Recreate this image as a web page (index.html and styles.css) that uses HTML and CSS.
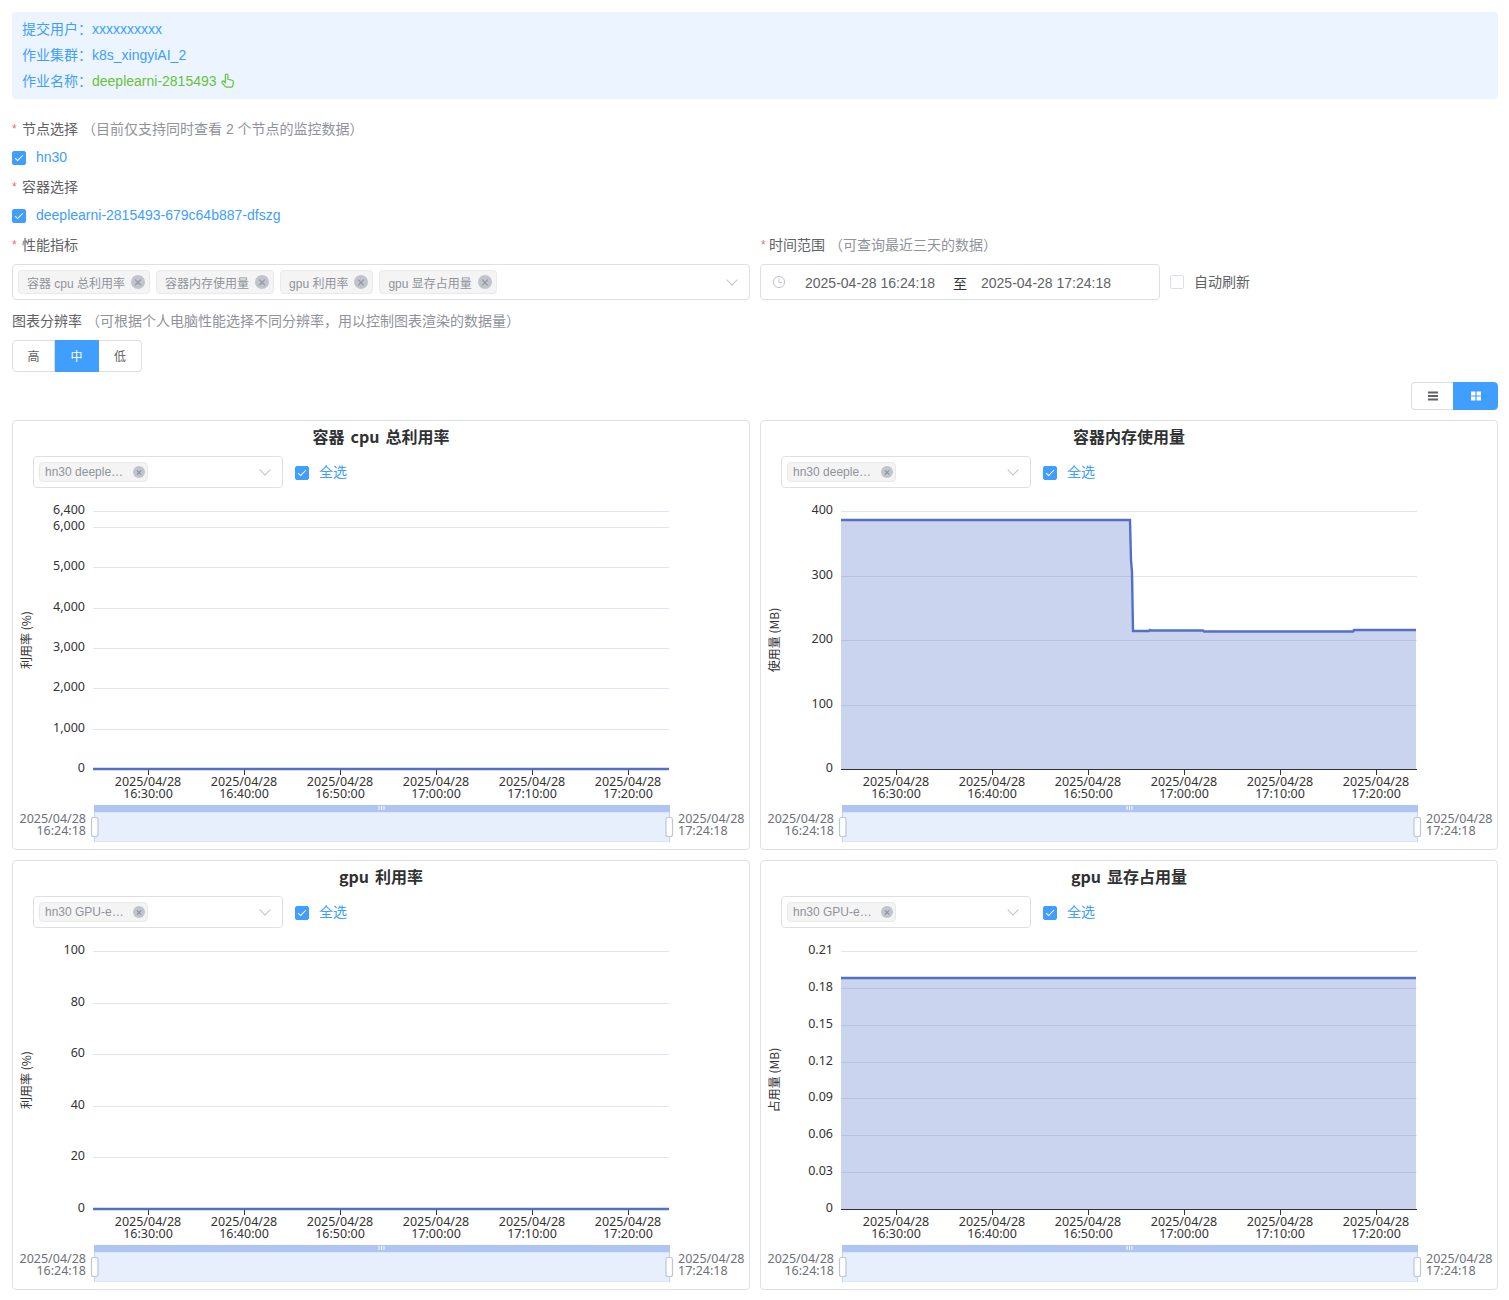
FILE: index.html
```html
<!DOCTYPE html>
<html lang="zh-CN">
<head>
    <meta charset="UTF-8">
    <meta name="viewport" content="width=device-width, initial-scale=1.0">
    <title>作业监控</title>
    <link rel="stylesheet" href="styles.css">
</head>
<body>
    <div class="job-info">
        <div class="job-row"><span>提交用户：</span>xxxxxxxxxx</div>
        <div class="job-row"><span>作业集群：</span>k8s_xingyiAI_2</div>
        <div class="job-row"><span>作业名称：</span><span class="job-link">deeplearni-2815493
            <svg class="hand-icon" viewBox="0 0 14 14"><path d="M5 7.2V2.1a1.2 1.2 0 0 1 2.4 0V5.9l3.9.9c.8.2 1.3.9 1.2 1.7l-.5 3.6c-.1.6-.6 1-1.2 1H5.9c-.4 0-.8-.2-1-.5L2 9.3c-.4-.5-.3-1.2.2-1.6.5-.4 1.2-.3 1.6.1L5 9z"/></svg></span></div>
    </div>

    <div class="field">
        <div class="field-label"><span class="req">*</span>节点选择<span class="hint">（目前仅支持同时查看 2 个节点的监控数据）</span></div>
        <label class="check-row"><span class="check checked"></span>hn30</label>
    </div>

    <div class="field">
        <div class="field-label"><span class="req">*</span>容器选择</div>
        <label class="check-row"><span class="check checked"></span>deeplearni-2815493-679c64b887-dfszg</label>
    </div>

    <div class="field-columns">
        <div>
            <div class="field-label wide"><span class="req">*</span>性能指标</div>
            <div class="select large">
                <span class="tag">容器 cpu 总利用率<i class="tag-close"></i></span>
                <span class="tag">容器内存使用量<i class="tag-close"></i></span>
                <span class="tag">gpu 利用率<i class="tag-close"></i></span>
                <span class="tag">gpu 显存占用量<i class="tag-close"></i></span>
                <i class="arrow"></i>
            </div>
        </div>
        <div>
            <div class="field-label wide"><span class="req narrow">*</span>时间范围<span class="hint">（可查询最近三天的数据）</span></div>
            <div class="time-row">
                <div class="date-range">
                    <svg class="clock-icon" viewBox="0 0 14 14"><circle cx="7" cy="7" r="5.6"/><path d="M7 3.6V7.4H10"/></svg>
                    <span class="date-value">2025-04-28 16:24:18</span>
                    <span class="date-sep">至</span>
                    <span class="date-value">2025-04-28 17:24:18</span>
                </div>
                <label class="auto-refresh"><span class="check"></span>自动刷新</label>
            </div>
        </div>
    </div>

    <div class="field resolution">
        <div class="field-label wide"><span>图表分辨率</span><span class="hint">（可根据个人电脑性能选择不同分辨率，用以控制图表渲染的数据量）</span></div>
        <div class="radio-group">
            <span class="radio">高</span>
            <span class="radio active">中</span>
            <span class="radio">低</span>
        </div>
    </div>

    <div class="view-bar">
        <div class="view-toggle">
            <span class="view-btn">
                <svg viewBox="0 0 10 10"><path d="M0 .5h10v2H0zM0 4h10v2H0zM0 7.5h10v2H0z"/></svg>
            </span>
            <span class="view-btn active">
                <svg viewBox="0 0 10 10"><path d="M0 .5h4.4v4H0zM5.6 .5H10v4H5.6zM0 5.6h4.4v4H0zM5.6 5.6H10v4H5.6z"/></svg>
            </span>
        </div>
    </div>

    <div class="chart-grid">
        <div class="card">
            <div class="card-title">容器 cpu 总利用率</div>
            <div class="card-tools">
                <div class="select small"><span class="tag"><span class="tag-text">hn30 deeple…</span><i class="tag-close"></i></span><i class="arrow"></i></div>
                <label class="check-row"><span class="check checked"></span>全选</label>
            </div>
            <svg class="chart" id="chartCpu" viewBox="0 0 736 348"></svg>
        </div>
        <div class="card">
            <div class="card-title">容器内存使用量</div>
            <div class="card-tools">
                <div class="select small"><span class="tag"><span class="tag-text">hn30 deeple…</span><i class="tag-close"></i></span><i class="arrow"></i></div>
                <label class="check-row"><span class="check checked"></span>全选</label>
            </div>
            <svg class="chart" id="chartMem" viewBox="0 0 736 348"></svg>
        </div>
        <div class="card">
            <div class="card-title">gpu 利用率</div>
            <div class="card-tools">
                <div class="select small"><span class="tag"><span class="tag-text">hn30 GPU-e…</span><i class="tag-close"></i></span><i class="arrow"></i></div>
                <label class="check-row"><span class="check checked"></span>全选</label>
            </div>
            <svg class="chart" id="chartGpu" viewBox="0 0 736 348"></svg>
        </div>
        <div class="card">
            <div class="card-title">gpu 显存占用量</div>
            <div class="card-tools">
                <div class="select small"><span class="tag"><span class="tag-text">hn30 GPU-e…</span><i class="tag-close"></i></span><i class="arrow"></i></div>
                <label class="check-row"><span class="check checked"></span>全选</label>
            </div>
            <svg class="chart" id="chartVram" viewBox="0 0 736 348"></svg>
        </div>
    </div>

    <script src="charts.js"></script>
</body>
</html>
```

FILE: styles.css
```css
* {
    box-sizing: border-box;
}

body {
    margin: 0;
    padding: 12px 11px 12px 12px;
    font-family: "Liberation Sans", "Noto Sans CJK SC", sans-serif;
    font-size: 14px;
    color: #606266;
    background-color: #fff;
}

/* job info */
.job-info {
    height: 87px;
    padding: 4px 10px;
    background-color: #ecf5ff;
    border-radius: 4px;
    color: #409eff;
}

.job-row {
    line-height: 26px;
}

.job-link {
    color: #67c23a;
}

.hand-icon {
    width: 15px;
    height: 15px;
    vertical-align: -2px;
    fill: none;
    stroke: #67c23a;
    stroke-width: 1.1;
}

/* form */
.field {
    margin-top: 10px;
}

.job-info + .field {
    margin-top: 20px;
}

.field.resolution {
    margin-top: 11px;
}

.field-label {
    display: flex;
    line-height: 20px;
    margin-bottom: 8px;
}

.field-label.wide {
    margin-bottom: 9px;
}

.req {
    width: 10px;
    color: #f56c6c;
    font-size: 12px;
}

.req.narrow {
    width: 9px;
    margin-left: 1px;
    margin-right: -1px;
}

.hint {
    margin-left: 4px;
    color: #909399;
}

.check-row {
    display: flex;
    align-items: center;
    height: 20px;
    color: #409eff;
}

.check {
    position: relative;
    flex: none;
    width: 14px;
    height: 14px;
    margin-right: 10px;
    border: 1px solid #dcdfe6;
    border-radius: 2px;
    background-color: #fff;
}

.check-row .check {
    margin-top: 2px;
}

.check.checked {
    background-color: #409eff;
    border-color: #409eff;
}

.check.checked::after {
    content: "";
    position: absolute;
    left: 4px;
    top: 1px;
    width: 3px;
    height: 7px;
    border: 1px solid #fff;
    border-width: 0 1px 1px 0;
    transform: rotate(45deg);
}

.field-columns {
    display: grid;
    grid-template-columns: 1fr 1fr;
    gap: 10px;
    margin-top: 10px;
}

.select {
    position: relative;
    display: flex;
    align-items: center;
    gap: 6px;
    background-color: #fff;
    border: 1px solid #dcdfe6;
    border-radius: 4px;
}

.select.large {
    height: 36px;
    padding-left: 5px;
}

.select.small {
    width: 250px;
    height: 32px;
    padding-left: 5px;
}

.tag {
    display: flex;
    align-items: center;
    height: 24px;
    padding: 0 4px 0 8px;
    font-size: 12px;
    color: #909399;
    background-color: #f4f4f5;
    border: 1px solid #e9e9eb;
    border-radius: 4px;
    white-space: nowrap;
}

.select.small .tag {
    height: 20px;
    padding: 0 2px 0 5px;
}

.tag-text {
    display: block;
    width: 78px;
}

.tag-close {
    position: relative;
    width: 14px;
    height: 14px;
    margin-left: 6px;
    border-radius: 50%;
    background-color: #c0c4cc;
}

.select.small .tag-close {
    width: 12px;
    height: 12px;
    margin-left: 10px;
}

.tag-close::before,
.tag-close::after {
    content: "";
    position: absolute;
    left: 50%;
    top: 50%;
    width: 8px;
    height: 1px;
    margin: -0.5px 0 0 -4px;
    background-color: #909399;
    transform: rotate(45deg);
}

.tag-close::after {
    transform: rotate(-45deg);
}

.select.small .tag-close::before,
.select.small .tag-close::after {
    width: 6px;
    margin-left: -3px;
}

.arrow {
    position: absolute;
    right: 13px;
    top: 50%;
    width: 8px;
    height: 8px;
    margin-top: -6px;
    border: 1px solid #c0c4cc;
    border-width: 0 1px 1px 0;
    transform: rotate(45deg);
}

.time-row {
    display: flex;
    align-items: center;
}

.date-range {
    display: flex;
    align-items: center;
    width: 400px;
    height: 36px;
    padding: 2px 0 0 11px;
    border: 1px solid #dcdfe6;
    border-radius: 4px;
}

.clock-icon {
    width: 14px;
    height: 14px;
    margin-top: -2px;
    margin-right: 19px;
    fill: none;
    stroke: #c0c4cc;
    stroke-width: 1;
}

.date-sep {
    width: 46px;
    padding-left: 4px;
    text-align: center;
    color: #303133;
}

.auto-refresh {
    display: flex;
    align-items: center;
    margin-left: 10px;
    padding-bottom: 2px;
}

.auto-refresh .check {
    margin-top: 2px;
}

.radio-group {
    display: inline-flex;
    height: 32px;
}

.radio {
    display: flex;
    align-items: center;
    justify-content: center;
    width: 43px;
    padding-bottom: 1px;
    font-size: 12px;
    border: 1px solid #dcdfe6;
    border-left: none;
}

.radio:first-child {
    border-left: 1px solid #dcdfe6;
    border-radius: 4px 0 0 4px;
}

.radio:last-child {
    border-radius: 0 4px 4px 0;
}

.radio.active {
    width: 44px;
    background-color: #409eff;
    border-color: #409eff;
    color: #fff;
}

.view-bar {
    display: flex;
    justify-content: flex-end;
    margin-top: 10px;
}

.view-toggle {
    display: flex;
    height: 28px;
}

.view-btn {
    display: flex;
    align-items: center;
    justify-content: center;
    width: 42px;
    border: 1px solid #dcdfe6;
    border-right: none;
    border-radius: 4px 0 0 4px;
    fill: #606266;
}

.view-btn.active {
    width: 45px;
    background-color: #409eff;
    border: 1px solid #409eff;
    border-radius: 0 4px 4px 0;
    fill: #fff;
}

.view-btn svg {
    width: 10px;
    height: 10px;
}

/* charts */
.chart-grid {
    display: grid;
    grid-template-columns: 1fr 1fr;
    gap: 10px;
    margin-top: 10px;
}

.card {
    height: 430px;
    border: 1px solid #dfe1e8;
    border-radius: 4px;
    background-color: #fff;
    overflow: hidden;
}

.card-title {
    margin-top: 3px;
    line-height: 24px;
    text-align: center;
    font-family: "Noto Sans CJK SC", sans-serif;
    font-size: 16px;
    font-weight: 700;
    word-spacing: 2.5px;
    color: #303133;
}

.card-tools {
    display: flex;
    align-items: center;
    gap: 12px;
    margin: 8px 0 0 20px;
}

.card-tools .check-row {
    padding-bottom: 2px;
}

.card-tools .check-row .check {
    margin-top: 4px;
}

.chart {
    display: block;
    width: 736px;
    height: 348px;
    margin-top: 12px;
}

.chart text {
    font-family: "Noto Sans", "Noto Sans CJK SC", sans-serif;
    font-size: 12.5px;
    fill: #333;
}

.chart .axis-name {
    font-family: "Noto Sans CJK SC", sans-serif;
    font-size: 12px;
}

.chart .zoom-label {
    fill: #6e7079;
}

.grid-line {
    stroke: #e0e6f1;
}

.axis-line {
    stroke: #333;
}

.area {
    fill: #5470c6;
    fill-opacity: 0.3;
}

.line {
    fill: none;
    stroke: #5470c6;
    stroke-width: 2.4;
}

.zoom-bar {
    fill: #aec5f3;
}

.zoom-body {
    fill: #e7eefc;
    stroke: #dde6f8;
}

.zoom-edge {
    stroke: #c3d3f4;
}

.zoom-handle {
    fill: #fff;
    stroke: #bcc7dc;
    stroke-width: 1.2;
}

.zoom-grip {
    stroke: #fff;
}
```

FILE: charts.js
```javascript
// plot area inside the svg
const LEFT = 80;
const RIGHT = 656;
const TOP = 11;
const BOTTOM = 269;

const TICKS = [
    [135, '16:30:00'],
    [231, '16:40:00'],
    [327, '16:50:00'],
    [423, '17:00:00'],
    [519, '17:10:00'],
    [615, '17:20:00']
];

function text(x, y, str, cls, anchor) {
    return `<text x="${x}" y="${y}" class="${cls || ''}" text-anchor="${anchor || 'middle'}" dominant-baseline="central">${str}</text>`;
}

function drawChart(id, opts) {
    const scale = v => BOTTOM - (v / opts.max) * (BOTTOM - TOP);
    let svg = '';

    // grid and y labels
    opts.yLabels.forEach(([value, label]) => {
        const y = Math.round(scale(value)) + 0.5;
        if (value !== 0) {
            svg += `<line class="grid-line" x1="${LEFT}" x2="${RIGHT}" y1="${y}" y2="${y}"/>`;
        }
        svg += text(72, y - 2, label, '', 'end');
    });

    svg += `<text class="axis-name" text-anchor="middle" dominant-baseline="central" transform="translate(12 140) rotate(-90)">${opts.name}</text>`;

    // x axis
    svg += `<line class="axis-line" x1="${LEFT}" x2="${RIGHT}" y1="269.5" y2="269.5"/>`;
    TICKS.forEach(([x, time]) => {
        svg += `<line class="axis-line" x1="${x + 0.5}" x2="${x + 0.5}" y1="269" y2="275"/>`;
        svg += text(x, 281, '2025/04/28');
        svg += text(x, 293, time);
    });

    // series
    const points = opts.points.map(p => p.join(',')).join(' ');
    const first = opts.points[0][0];
    const last = opts.points[opts.points.length - 1][0];
    if (opts.filled) {
        svg += `<polygon class="area" points="${first},${BOTTOM} ${points} ${last},${BOTTOM}"/>`;
    }
    svg += `<polyline class="line" points="${points}"/>`;

    // data zoom
    svg += `<rect class="zoom-body" x="81.5" y="312.5" width="575" height="29"/>`;
    svg += `<rect class="zoom-bar" x="81" y="305" width="576" height="7"/>`;
    svg += `<line class="zoom-edge" x1="81.5" x2="81.5" y1="312" y2="342"/>`;
    svg += `<line class="zoom-edge" x1="656.5" x2="656.5" y1="312" y2="342"/>`;
    [366, 368.5, 371].forEach(x => {
        svg += `<line class="zoom-grip" x1="${x}" x2="${x}" y1="306" y2="310"/>`;
    });
    svg += `<rect class="zoom-handle" x="78.5" y="317.5" width="6.5" height="19" rx="2"/>`;
    svg += `<rect class="zoom-handle" x="653" y="317.5" width="6.5" height="19" rx="2"/>`;
    svg += text(73, 318, '2025/04/28', 'zoom-label', 'end');
    svg += text(73, 330, '16:24:18', 'zoom-label', 'end');
    svg += text(665, 318, '2025/04/28', 'zoom-label', 'start');
    svg += text(665, 330, '17:24:18', 'zoom-label', 'start');

    document.getElementById(id).innerHTML = svg;
}

drawChart('chartCpu', {
    name: '利用率 (%)',
    max: 6400,
    yLabels: [[0, '0'], [1000, '1,000'], [2000, '2,000'], [3000, '3,000'], [4000, '4,000'], [5000, '5,000'], [6000, '6,000'], [6400, '6,400']],
    points: [[80, 269], [656, 269]]
});

drawChart('chartMem', {
    name: '使用量 (MB)',
    max: 400,
    filled: true,
    yLabels: [[0, '0'], [100, '100'], [200, '200'], [300, '300'], [400, '400']],
    points: [[80, 20], [369, 20], [370, 60], [371, 72], [372, 131], [388, 131], [389, 130], [390, 130.5], [442, 130.5], [443, 131.5], [592, 131.5], [593, 130], [655, 130]]
});

drawChart('chartGpu', {
    name: '利用率 (%)',
    max: 100,
    yLabels: [[0, '0'], [20, '20'], [40, '40'], [60, '60'], [80, '80'], [100, '100']],
    points: [[80, 269], [656, 269]]
});

drawChart('chartVram', {
    name: '占用量 (MB)',
    max: 0.21,
    filled: true,
    yLabels: [[0, '0'], [0.03, '0.03'], [0.06, '0.06'], [0.09, '0.09'], [0.12, '0.12'], [0.15, '0.15'], [0.18, '0.18'], [0.21, '0.21']],
    points: [[80, 38], [655, 38]]
});
```
